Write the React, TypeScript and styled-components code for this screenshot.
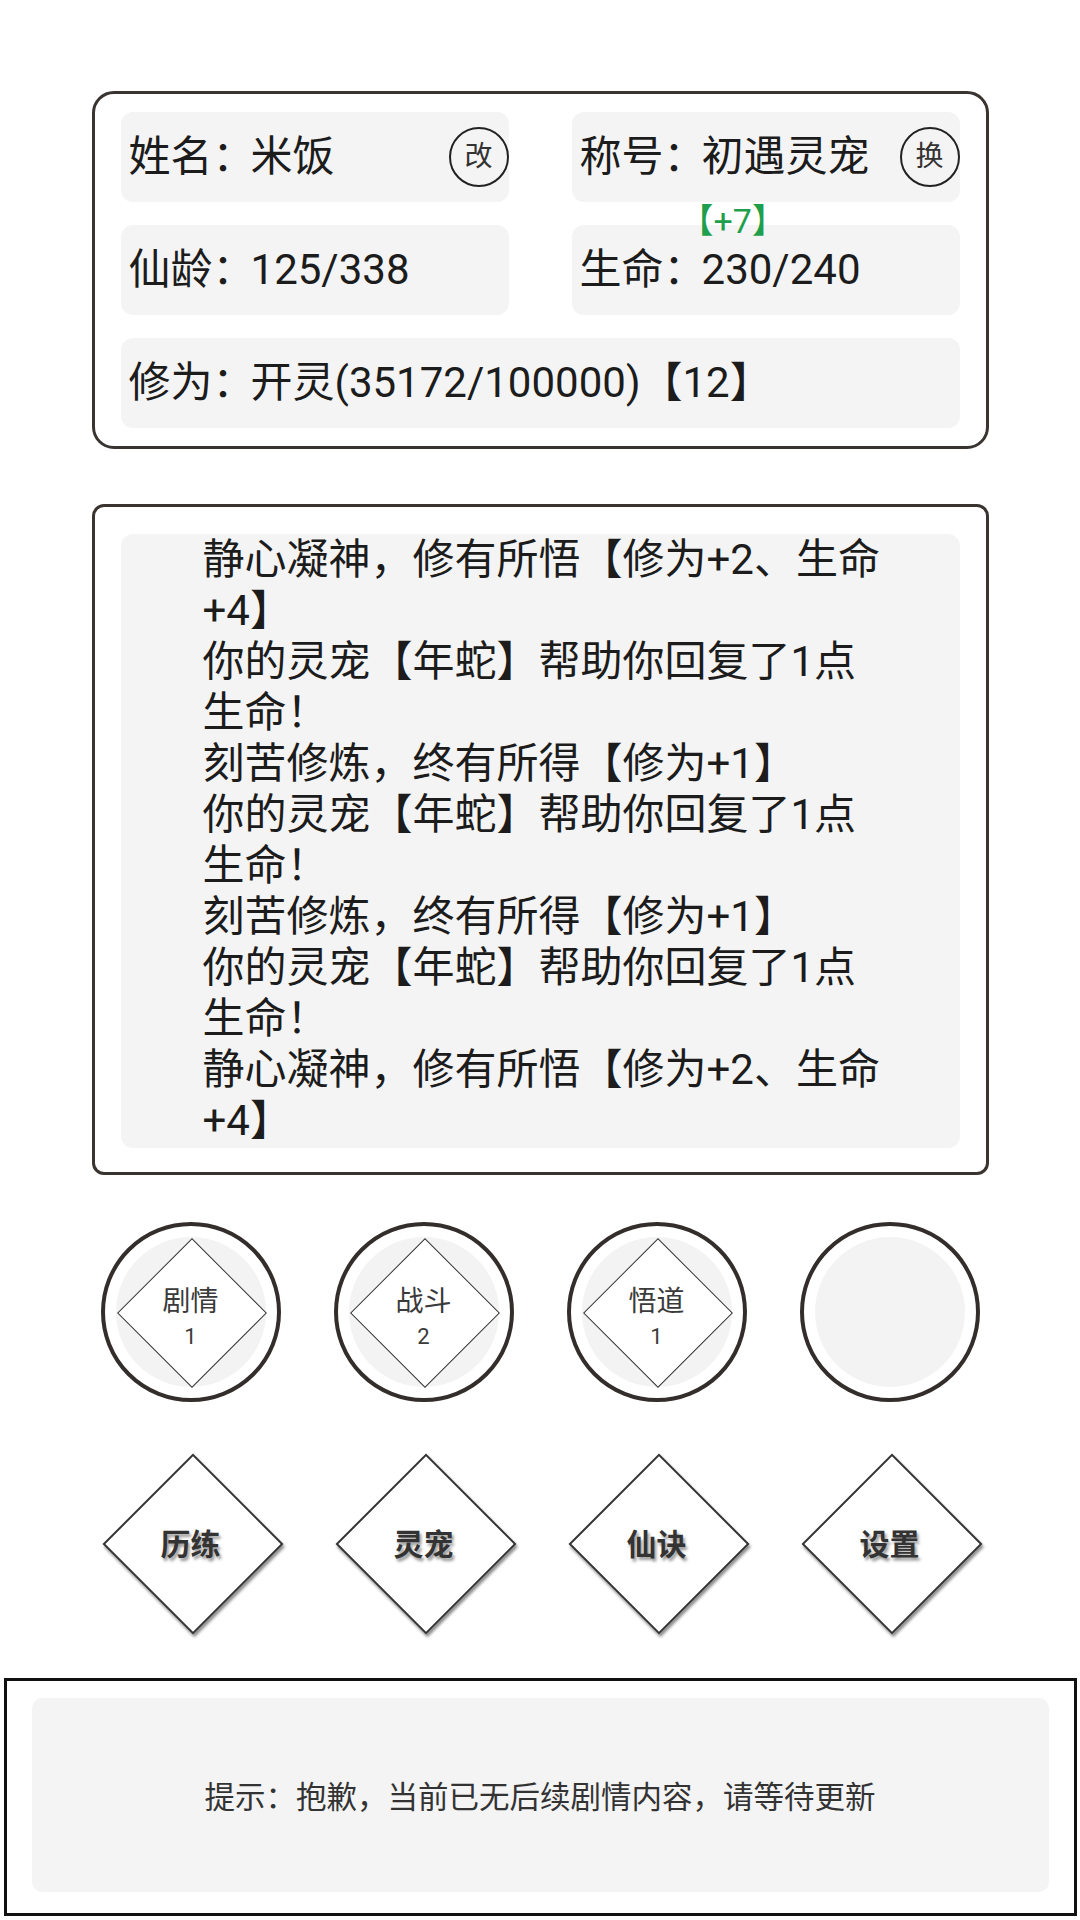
import React from "react";
import styled, { createGlobalStyle } from "styled-components";

const GlobalStyle = createGlobalStyle`
  html, body {
    margin: 0;
    padding: 0;
    background: #ffffff;
  }
  body {
    font-family: Roboto, "Noto Sans CJK SC", sans-serif;
    color: #1c1c1c;
  }
  * { box-sizing: border-box; }
`;

const Page = styled.div`
  width: 1080px;
  min-height: 1920px;
  padding-top: 91px;
  display: flex;
  flex-direction: column;
  align-items: center;
`;

const InfoCard = styled.section`
  width: 897px;
  border: 3px solid #3a3431;
  border-radius: 22px;
  padding: 18px 26px;
  display: grid;
  grid-template-columns: 1fr 1fr;
  column-gap: 63px;
  row-gap: 23px;
`;

const Field = styled.div<{ $wide?: boolean }>`
  position: relative;
  grid-column: ${(p) => (p.$wide ? "1 / -1" : "auto")};
  height: 90px;
  background: #f4f4f4;
  border-radius: 12px;
  display: flex;
  align-items: center;
  padding-left: 8px;
  font-size: 42px;
  line-height: 1;
  white-space: nowrap;
`;

const Colon = styled.span`
  margin-right: -4px;
`;

const RoundTag = styled.span`
  margin-left: auto;
  width: 60px;
  height: 60px;
  border: 2px solid #222;
  border-radius: 50%;
  display: flex;
  align-items: center;
  justify-content: center;
  font-size: 28px;
  color: #333;
  background: #f4f4f4;
`;

const Bonus = styled.span`
  position: absolute;
  left: 108px;
  top: -21px;
  font-size: 34px;
  line-height: 1;
  color: #1f9f4b;
`;

const LogCard = styled.section`
  margin-top: 55px;
  width: 897px;
  border: 3px solid #3a3431;
  border-radius: 12px;
  padding: 27px 26px 24px;
`;

const LogBody = styled.div`
  height: 614px;
  overflow: hidden;
  background: #f4f4f4;
  border-radius: 12px;
  padding: 0 70px 0 82px;
  font-size: 42px;
  line-height: 51px;
  color: #1c1c1c;
`;

const LogLine = styled.div``;

const ButtonRow = styled.div<{ $gapTop: number }>`
  margin-top: ${(p) => p.$gapTop}px;
  display: grid;
  grid-template-columns: repeat(4, 180px);
  column-gap: 53px;
`;

const RoundButton = styled.div`
  width: 180px;
  height: 180px;
  border-radius: 50%;
  border: 4px solid #332e2b;
  padding: 11px;
  background: #fff;
`;

const RoundInner = styled.div`
  width: 100%;
  height: 100%;
  border-radius: 50%;
  background: #f3f3f3;
  display: flex;
  align-items: center;
  justify-content: center;
`;

const SmallDiamond = styled.div`
  position: relative;
  width: 150px;
  height: 150px;
  display: flex;
  flex-direction: column;
  align-items: center;
  justify-content: center;
  padding-top: 14px;
  color: #3a3a3a;

  &::before {
    content: "";
    position: absolute;
    left: 23px;
    top: 23px;
    width: 104px;
    height: 104px;
    background: #fff;
    border: 1.5px solid #333;
    transform: rotate(45deg);
  }
`;

const DiamondLabel = styled.span`
  position: relative;
  font-size: 28px;
  line-height: 36px;
`;

const DiamondCount = styled.span`
  position: relative;
  font-size: 22px;
  line-height: 34px;
`;

const MenuItem = styled.div`
  position: relative;
  width: 180px;
  height: 180px;
  display: flex;
  align-items: center;
  justify-content: center;

  &::before {
    content: "";
    position: absolute;
    left: 28px;
    top: 28px;
    width: 124px;
    height: 124px;
    background: #fff;
    border: 2px solid #333;
    transform: rotate(45deg);
    box-shadow: 3px 1px 3px rgba(0, 0, 0, 0.45);
  }
`;

const MenuLabel = styled.span`
  position: relative;
  font-size: 30px;
  font-weight: 700;
  color: #333;
  text-shadow: 2px 3px 3px rgba(0, 0, 0, 0.4);
`;

const Footer = styled.footer`
  margin-top: 46px;
  width: 1073px;
  height: 238px;
  border: 3px solid #111;
  padding: 17px 25px 21px;
`;

const Notice = styled.div`
  height: 100%;
  background: #f4f4f4;
  border-radius: 10px;
  display: flex;
  align-items: center;
  justify-content: center;
  font-size: 30.5px;
  color: #333;
`;

const logs = [
  "静心凝神，修有所悟【修为+2、生命+4】",
  "你的灵宠【年蛇】帮助你回复了1点生命！",
  "刻苦修炼，终有所得【修为+1】",
  "你的灵宠【年蛇】帮助你回复了1点生命！",
  "刻苦修炼，终有所得【修为+1】",
  "你的灵宠【年蛇】帮助你回复了1点生命！",
  "静心凝神，修有所悟【修为+2、生命+4】",
];

const events = [
  { label: "剧情", count: 1 },
  { label: "战斗", count: 2 },
  { label: "悟道", count: 1 },
];

const menu = ["历练", "灵宠", "仙诀", "设置"];

export default function App() {
  return (
    <>
      <GlobalStyle />
      <Page>
        <InfoCard>
          <Field>
            姓名<Colon>：</Colon>米饭
            <RoundTag>改</RoundTag>
          </Field>
          <Field>
            称号<Colon>：</Colon>初遇灵宠
            <RoundTag>换</RoundTag>
          </Field>
          <Field>
            仙龄<Colon>：</Colon>125/338
          </Field>
          <Field>
            <Bonus>【+7】</Bonus>
            生命<Colon>：</Colon>230/240
          </Field>
          <Field $wide>
            修为<Colon>：</Colon>开灵(35172/100000)【12】
          </Field>
        </InfoCard>

        <LogCard>
          <LogBody>
            {logs.map((l, i) => (
              <LogLine key={i}>{l}</LogLine>
            ))}
          </LogBody>
        </LogCard>

        <ButtonRow $gapTop={47}>
          {events.map((e) => (
            <RoundButton key={e.label}>
              <RoundInner>
                <SmallDiamond>
                  <DiamondLabel>{e.label}</DiamondLabel>
                  <DiamondCount>{e.count}</DiamondCount>
                </SmallDiamond>
              </RoundInner>
            </RoundButton>
          ))}
          <RoundButton>
            <RoundInner />
          </RoundButton>
        </ButtonRow>

        <ButtonRow $gapTop={50}>
          {menu.map((m) => (
            <MenuItem key={m}>
              <MenuLabel>{m}</MenuLabel>
            </MenuItem>
          ))}
        </ButtonRow>

        <Footer>
          <Notice>提示：抱歉，当前已无后续剧情内容，请等待更新</Notice>
        </Footer>
      </Page>
    </>
  );
}
